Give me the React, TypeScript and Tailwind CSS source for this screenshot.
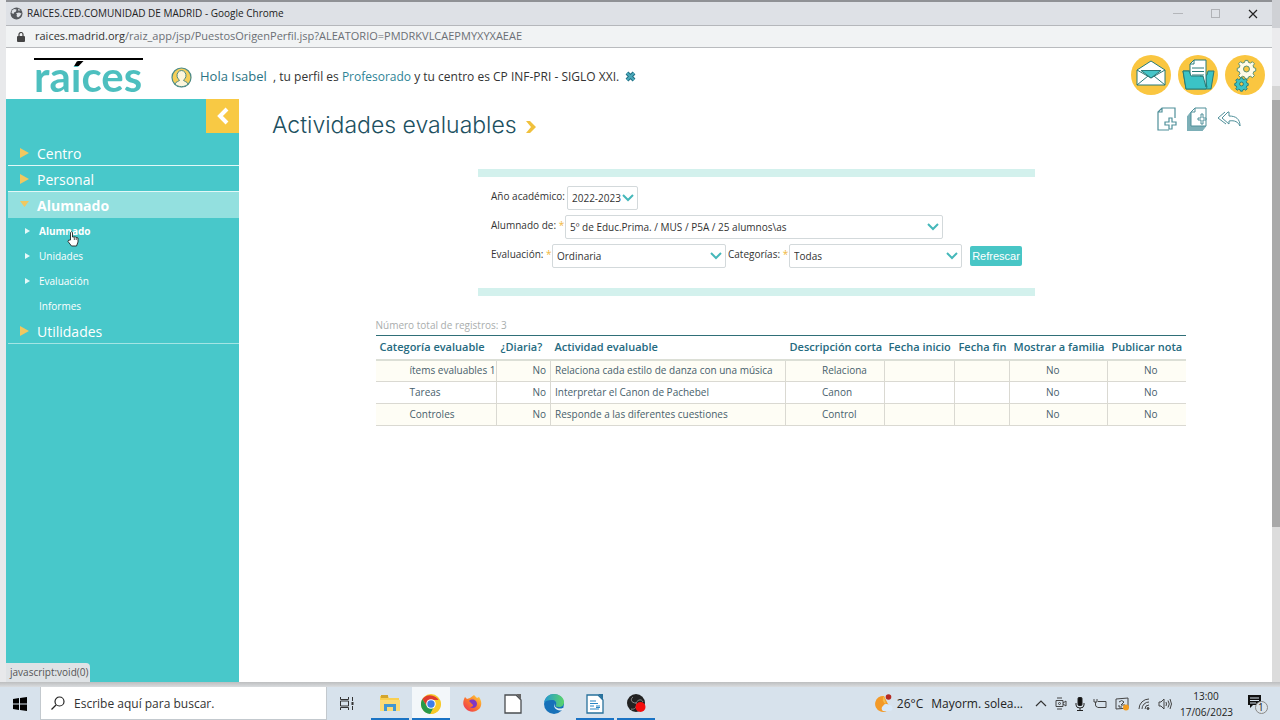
import React, { useState } from 'react';

const ROWS = [
  { categoria: 'ítems evaluables 1', diaria: 'No', actividad: 'Relaciona cada estilo de danza con una música', corta: 'Relaciona', familia: 'No', nota: 'No' },
  { categoria: 'Tareas', diaria: 'No', actividad: 'Interpretar el Canon de Pachebel', corta: 'Canon', familia: 'No', nota: 'No' },
  { categoria: 'Controles', diaria: 'No', actividad: 'Responde a las diferentes cuestiones', corta: 'Control', familia: 'No', nota: 'No' },
];

const SUBMENU = [
  { label: 'Alumnado', arrow: true },
  { label: 'Unidades', arrow: true },
  { label: 'Evaluación', arrow: true },
  { label: 'Informes', arrow: false },
];

const GEAR =
  'M-2 -12h4l1 3 3 1 3-2 3 3-2 3 1 3 3 1v4l-3 1-1 3 2 3-3 3-3-2-3 1-1 3h-4l-1-3-3-1-3 2-3-3 2-3-1-3-3-1v-4l3-1 1-3-2-3 3-3 3 2 3-1z';

function TitleBar() {
  return (
    <div className="h-[26px] shrink-0 flex items-center justify-between bg-[#dee1e6] border-t-2 border-t-[#8f9195] border-b border-b-[#b5b7bb] pl-1 pr-[14px]">
      <div className="flex items-center gap-1">
        <svg width="13" height="13" viewBox="0 0 13 13" aria-hidden="true">
          <circle cx="6.5" cy="6.5" r="6" fill="#55585d" />
          <path d="M2 3.500l2-1.500 2.500.5-.5 2-2 1-.5 1.500L1.500 6zM7 6l2-.5 2.500 1-1.500 2.500-2 1.500-1.500-1.500.5-1.500-1-1zM8.500 1.500l2 2H8z" fill="#dee1e6" />
        </svg>
        <span className="text-[10px] text-[#222]">RAICES.CED.COMUNIDAD DE MADRID - Google Chrome</span>
      </div>
      <div className="flex items-center gap-7">
        <button aria-label="Minimizar" className="w-[10px] h-[10px] flex items-center">
          <span className="w-full h-px bg-[#b4b6ba]" />
        </button>
        <button aria-label="Maximizar" className="w-[9px] h-[9px] border border-[#b0b2b6]" />
        <button aria-label="Cerrar">
          <svg width="10" height="10" viewBox="0 0 10 10" stroke="#222" strokeWidth="1.200">
            <path d="M1 1l8 8M9 1l-8 8" />
          </svg>
        </button>
      </div>
    </div>
  );
}

function AddressBar() {
  return (
    <div className="h-[22px] shrink-0 flex items-center gap-[10px] bg-[#f1f3f4] border-b border-[#b9bbbe] pl-[11px]">
      <svg width="8" height="10" viewBox="0 0 8 10" aria-hidden="true">
        <rect y="4" width="8" height="6" rx="1" fill="#444" />
        <path d="M2 4V2.500a2 2 0 0 1 4 0V4" fill="none" stroke="#444" strokeWidth="1.200" />
      </svg>
      <span className="text-[11px] text-[#6b6f74]">
        <span className="text-[#333]">raices.madrid.org</span>/raiz_app/jsp/PuestosOrigenPerfil.jsp?ALEATORIO=PMDRKVLCAEPMYXYXAEAE
      </span>
    </div>
  );
}

function Header() {
  return (
    <header className="h-[51px] shrink-0 flex items-center bg-white pl-7 pr-[7px] pt-[3px]">
      <div className="w-[109px] h-[34px] border-t-2 border-black flex items-center">
        <span className="text-[42px] leading-[32px] font-bold font-[Lato,sans-serif] text-transparent bg-clip-text bg-[linear-gradient(#000_6px,#4dbfbf_6px)]">
          raíces
        </span>
      </div>
      <svg className="ml-7 mt-1" width="21" height="21" viewBox="0 0 21 21" aria-hidden="true">
        <circle cx="10.500" cy="10.500" r="9.500" fill="#f5cf5a" stroke="#4b8a86" strokeWidth="1.200" />
        <path d="M4 17c1-3 4-2 4.500-4a4.500 5 0 1 1 4 0c.5 2 3.500 1 4.500 4-3 3.500-10 3.500-13 0z" fill="#fdf6dc" stroke="#4b8a86" />
      </svg>
      <p className="ml-2 mt-[3px] text-xs text-[#333] whitespace-nowrap">
        <a href="#" className="text-[13px] text-[#2a7384]">Hola Isabel</a>&nbsp; , tu perfil es{' '}
        <a href="#" className="text-[#2e8496]">Profesorado</a> y tu centro es CP INF-PRI - SIGLO XXI.
      </p>
      <button aria-label="Cerrar sesión" className="ml-[6px] mt-[3px]">
        <svg width="11" height="11" viewBox="0 0 11 11">
          <path d="M2 2l7 7M9 2l-7 7" stroke="#236f83" strokeWidth="4" />
          <path d="M2 2l7 7M9 2l-7 7" stroke="#4aa9bb" strokeWidth="2" />
        </svg>
      </button>
      <div className="ml-auto flex gap-[7px]">
        <button aria-label="Mensajes">
          <svg width="40" height="40" viewBox="0 0 40 40" stroke="#287b78" strokeLinejoin="round">
            <circle cx="20" cy="20" r="20" fill="#fac640" stroke="none" />
            <path d="M6 15L20 6l14 9v15H6z" fill="#fff" />
            <path d="M10 15.500h20L20 23z" fill="#45c6c8" />
            <path d="M6 15l14 8 14-8M6 30l11-9M34 30l-11-9" fill="none" />
          </svg>
        </button>
        <button aria-label="Documentos">
          <svg width="40" height="40" viewBox="0 0 40 40" stroke="#287b78" strokeLinejoin="round">
            <circle cx="20" cy="20" r="20" fill="#fac640" stroke="none" />
            <path d="M5 16h9v4h15l1-4h6l-3 18H8z" fill="#3bc3c6" />
            <path d="M12 9l4-4h12v27l-3-7H12z" fill="#fff" />
            <path d="M12 9h4V5M14 13h12M14 16.500h12M14 20h12" fill="none" />
            <path d="M5 16h6l2 5h13l3 11-1 2H8z" fill="#3bc3c6" />
            <path d="M28 20v12l-3-11h-3" fill="#fff" />
          </svg>
        </button>
        <button aria-label="Configuración">
          <svg width="40" height="40" viewBox="0 0 40 40">
            <circle cx="20" cy="20" r="20" fill="#fac640" />
            <g transform="translate(21.500 14) scale(.66)" stroke="#4b8a70" strokeWidth="1.400">
              <path d={GEAR} transform="translate(0 -1)" fill="#fffbe8" />
              <circle r="4.500" fill="#fac640" />
            </g>
            <g transform="translate(16.500 29) scale(.48)" stroke="#287b78" strokeWidth="2">
              <path d={GEAR} transform="translate(0 -1)" fill="#3bc3c6" />
              <circle r="4" fill="#fac640" />
            </g>
          </svg>
        </button>
      </div>
    </header>
  );
}

function MenuItem({ label, open = false, last = false }: { label: string; open?: boolean; last?: boolean }) {
  return (
    <button
      aria-expanded={open}
      className={`w-full h-[26px] flex items-center gap-2 pl-3 pt-px text-left text-[14px] text-white border-b ${
        open ? 'font-bold bg-[#93e0df] border-[#93e0df]' : last ? 'border-[#a4e5e4]' : 'border-[#e2f8f7]'
      }`}
    >
      <svg width="9" height="10" viewBox="0 0 9 10" fill="#f0c860" aria-hidden="true">
        <path d={open ? 'M0 1h9L4.500 7z' : 'M0 0l9 5-9 5z'} />
      </svg>
      {label}
    </button>
  );
}

function Sidebar() {
  return (
    <nav className="relative w-[233px] shrink-0 bg-[#48c8ca] flex flex-col">
      <button aria-label="Ocultar menú" className="self-end w-[33px] h-[34px] bg-[#f8c944] flex items-center justify-center">
        <svg width="13" height="18" viewBox="0 0 13 18" fill="none" stroke="#fff" strokeWidth="4">
          <path d="M11 2L4 9l7 7" />
        </svg>
      </button>
      <div className="pl-[2px] pt-[7px]">
        <MenuItem label="Centro" />
        <MenuItem label="Personal" />
        <MenuItem label="Alumnado" open />
        <ul>
          {SUBMENU.map((item, i) => (
            <li key={item.label}>
              <a href="#" className={`h-[25px] flex items-center gap-2 pl-[17px] pt-px text-[10px] text-white ${i === 0 ? 'font-bold' : ''}`}>
                <span className="w-[6px]">
                  {item.arrow && (
                    <svg width="5" height="6" viewBox="0 0 5 6" fill="#e6f9f9" aria-hidden="true">
                      <path d="M0 0l5 3-5 3z" />
                    </svg>
                  )}
                </span>
                {item.label}
              </a>
            </li>
          ))}
        </ul>
        <MenuItem label="Utilidades" last />
      </div>
      {/* pointer over the submenu */}
      <svg className="absolute left-[61px] top-[132px]" width="12" height="16" viewBox="0 0 12 16" aria-hidden="true">
        <path d="M3.500 9V1.500q1-1.500 2 0V6q3-.5 5.500 1v4l-1.500 4h-5L1 10.500q0-2 2.500-1.500z" fill="#fff" stroke="#222" strokeWidth=".9" />
        <path d="M7.300 6.500v2.500M9.200 7v2" stroke="#222" strokeWidth=".8" />
      </svg>
      <div className="absolute left-0 bottom-0 h-[19px] w-[84px] bg-[#dfe3e6] rounded-tr-sm px-1 text-[10px] leading-[18px] text-[#555]">
        javascript:void(0)
      </div>
    </nav>
  );
}

function Field({ id, label, required = false, labelClass, selectClass, options }: {
  id: string;
  label: string;
  required?: boolean;
  labelClass: string;
  selectClass: string;
  options: string[];
}) {
  const [value, setValue] = useState(options[0]);
  return (
    <div className="flex items-center">
      <label htmlFor={id} className={`pb-1 whitespace-nowrap ${labelClass}`}>
        {label}
        {required && <span className="text-[#f0b840]"> *</span>}
      </label>
      <div className={`relative ${selectClass}`}>
        <select
          id={id}
          value={value}
          onChange={(e) => setValue(e.target.value)}
          className="block w-full h-6 appearance-none rounded-xs border border-[#d3d9db] bg-white pl-1 outline-none"
        >
          {options.map((o) => (
            <option key={o}>{o}</option>
          ))}
        </select>
        <svg className="absolute right-[4px] top-[8px] pointer-events-none" width="12" height="8" viewBox="0 0 12 8" fill="none" stroke="#45b8ba" strokeWidth="2">
          <path d="M1 1l5 5 5-5" />
        </svg>
      </div>
    </div>
  );
}

function Filters() {
  return (
    <form className="w-[557px] mx-auto border-y-8 border-[#d3f1ed] pt-[9px] pb-[20px] pl-[13px] flex flex-col gap-[5px] text-[10px] text-[#333]">
      <Field id="anio" label="Año académico:" labelClass="w-[76px]" selectClass="w-[71px]" options={['2022-2023']} />
      <Field id="grupo" label="Alumnado de:" required labelClass="w-[74px]" selectClass="w-[378px]" options={['5º de Educ.Prima. / MUS / P5A / 25 alumnos\\as']} />
      <div className="flex items-center">
        <Field id="evaluacion" label="Evaluación:" required labelClass="w-[61px]" selectClass="w-[174px]" options={['Ordinaria']} />
        <Field id="categorias" label="Categorías:" required labelClass="w-[63px] pl-[2px]" selectClass="w-[173px]" options={['Todas']} />
        <button type="button" className="ml-2 w-[52px] h-5 rounded-xs bg-[#48c6c6] text-white text-[11px] font-['Liberation_Sans',sans-serif]">
          Refrescar
        </button>
      </div>
    </form>
  );
}

function ActivityTable() {
  return (
    <div className="pl-12 mt-[22px] flex justify-center">
      <div className="w-[810px]">
        <p className="h-[17px] text-[10px] leading-[15px] text-[#a9adad]">Número total de registros: 3</p>
        <table className="w-full table-fixed border-collapse text-[10px] text-[#47606c]">
          <colgroup>
            <col className="w-[121px]" />
            <col className="w-[54px]" />
            <col className="w-[235px]" />
            <col className="w-[99px]" />
            <col className="w-[70px]" />
            <col className="w-[55px]" />
            <col className="w-[98px]" />
            <col className="w-[78px]" />
          </colgroup>
          <thead>
            <tr className="h-6 border-t border-t-[#2f6f78] border-b-2 border-b-[#dcdfd6] text-left text-[11px] text-[#256a80] whitespace-nowrap">
              <th className="pl-1 font-semibold">Categoría evaluable</th>
              <th className="pl-1 font-semibold">¿Diaria?</th>
              <th className="pl-1 font-semibold">Actividad evaluable</th>
              <th className="pl-1 font-semibold">Descripción corta</th>
              <th className="pl-1 font-semibold">Fecha inicio</th>
              <th className="pl-1 font-semibold">Fecha fin</th>
              <th className="pl-1 font-semibold">Mostrar a familia</th>
              <th className="pl-1 font-semibold">Publicar nota</th>
            </tr>
          </thead>
          <tbody>
            {ROWS.map((row) => (
              <tr key={row.corta} className="h-[22px] border-b border-[#dad9d2] odd:bg-[#fefdf5] whitespace-nowrap">
                <td className="pl-[34px]">{row.categoria}</td>
                <td className="border-l border-[#dad9d2] pr-1 text-right">{row.diaria}</td>
                <td className="border-l border-[#dad9d2] pl-1">{row.actividad}</td>
                <td className="border-l border-[#dad9d2] pl-9">{row.corta}</td>
                <td className="border-l border-[#dad9d2]" />
                <td className="border-l border-[#dad9d2]" />
                <td className="border-l border-[#dad9d2] pl-9">{row.familia}</td>
                <td className="border-l border-[#dad9d2] pl-9">{row.nota}</td>
              </tr>
            ))}
          </tbody>
        </table>
      </div>
    </div>
  );
}

function Main() {
  return (
    <main className="flex-1 min-w-0 bg-white pl-[2px]">
      <div className="h-[70px] flex justify-between pl-[31px] pr-[30px] pt-2">
        <h1 className="h-9 flex items-center gap-2 text-[23px] font-light text-[#20505f] font-[Inter,sans-serif]">
          Actividades evaluables
          <svg className="mt-1" width="11" height="12" viewBox="0 0 11 12" fill="#f0c03c" aria-hidden="true">
            <path d="M1 0h4l6 6-6 6H1l5-6z" />
          </svg>
        </h1>
        <div className="flex gap-[10px] h-6">
          <button aria-label="Nueva actividad">
            <svg width="20" height="24" viewBox="0 0 20 24" fill="none" stroke="#4f8f99" strokeWidth="1.200">
              <path d="M18 11V1H5L1 5v18h11M1 5h4V1" />
              <path d="M12 11h3v4h4v3h-4v4h-3v-4H8v-3h4z" fill="#fff" />
            </svg>
          </button>
          <button aria-label="Copiar actividad">
            <svg width="20" height="24" viewBox="0 0 20 24" stroke="#4f8f99">
              <path d="M0 10l4-5v14h15l-4 5H0z" fill="#7dafb7" stroke="#7dafb7" />
              <path d="M8 1h11v18H4V5z" fill="#fff" />
              <path d="M4 5h4V1" fill="none" />
              <path d="M14 7h2v4h3v2h-3v4h-2v-4h-3v-2h3z" fill="#fff" />
            </svg>
          </button>
          <button aria-label="Volver">
            <svg width="25" height="18" viewBox="0 0 25 18" fill="none" stroke="#4f8f99" strokeLinejoin="round">
              <path d="M11 2L5 8l7 6v-3c6-1 9 1 11 5 0-7-4-10-11-10V2z" />
              <path d="M8 2L1 8l8 6" />
            </svg>
          </button>
        </div>
      </div>
      <Filters />
      <ActivityTable />
    </main>
  );
}

function WriterPage({ lines = false }: { lines?: boolean }) {
  return (
    <svg width="18" height="20" viewBox="0 0 18 20" aria-hidden="true">
      <path d="M1 1h11l5 5v13H1z" fill="#fff" stroke={lines ? '#28719c' : '#4a4d50'} strokeWidth="1.300" />
      <path d="M12 0h5v6z" fill={lines ? '#28719c' : '#666'} />
      {lines && <path d="M4 7h6M4 9.500h8M4 12h4M4 15h9M10 12h4M10 13.500h4" stroke="#2886c4" strokeWidth="1.200" />}
    </svg>
  );
}

function AppButton({ label, active = false, running = false, children }: {
  label: string;
  active?: boolean;
  running?: boolean;
  children: React.ReactNode;
}) {
  return (
    <button
      aria-label={label}
      className={`w-[38px] h-full flex items-center justify-center pt-[2px] border-b-2 ${active ? 'bg-[#f3f7fa]' : ''} ${
        running ? 'border-[#1a73c4]' : 'border-transparent'
      }`}
    >
      {children}
    </button>
  );
}

function Taskbar() {
  return (
    <footer className="h-[33px] shrink-0 flex items-center bg-[#d7e2ec] text-[#222]">
      <button aria-label="Inicio" className="w-10 h-full flex items-center justify-center">
        <svg width="14" height="14" viewBox="0 0 14 14">
          <path d="M0 2l6-1v5.500H0zM7 1l7-1v6.500H7zM0 7.500h6V13l-6-1zM7 7.500h7V14l-7-1z" />
        </svg>
      </button>
      <label className="w-[287px] h-full flex items-center gap-[9px] pl-[10px] bg-white border-x border-b border-[#c3c9ce]">
        <svg width="14" height="14" viewBox="0 0 14 14" fill="none" stroke="#222" strokeWidth="1.200">
          <circle cx="8.500" cy="5.500" r="4.500" />
          <path d="M5 9l-4.500 4.500" />
        </svg>
        <input className="w-56 pt-px text-xs outline-none placeholder:text-[#333]" placeholder="Escribe aquí para buscar." aria-label="Buscar" />
      </label>
      <button aria-label="Vista de tareas" className="w-10 h-full flex items-center justify-center">
        <svg width="14" height="13" viewBox="0 0 14 13" fill="none" stroke="#333">
          <path d="M.5 0v2.500h8V0M.5 13v-2.500h8V13M.5 4h8v5h-8zM12.500 0v4M12.500 9v4" />
          <path d="M11.500 5h2v3h-2z" fill="#333" stroke="none" />
        </svg>
      </button>
      <div className="h-full flex gap-[3px] pl-1">
        <AppButton label="Explorador de archivos" running>
          <svg width="20" height="17" viewBox="0 0 20 17">
            <path d="M0 1h8l1 2h10v13H0z" fill="#f9cf50" />
            <path d="M1 0h7v3H1z" fill="#d3a52d" />
            <path d="M0 5h20v11H0z" fill="#fbdb76" />
            <path d="M4 16V9h12v7h-3v-4H7v4z" fill="#4196d1" />
          </svg>
        </AppButton>
        <AppButton label="Google Chrome" active running>
          <svg width="20" height="20" viewBox="0 0 20 20">
            <circle cx="10" cy="10" r="10" fill="#f7c928" />
            <path d="M10 10H19a10 10 0 0 0-17.700-5L6 12.500z" fill="#df3b2e" />
            <path d="M1.300 5a10 10 0 0 0 8 15l4.200-8L6 12.500z" fill="#28994a" />
            <path d="M10 6h9a10 10 0 0 1-9.700 14l4.200-8z" fill="#f7c928" />
            <circle cx="10" cy="10" r="4.800" fill="#fff" />
            <circle cx="10" cy="10" r="3.700" fill="#3d7de8" />
          </svg>
        </AppButton>
        <AppButton label="Firefox">
          <svg width="19" height="19" viewBox="0 0 19 19">
            <defs>
              <linearGradient id="fox" x1="1" y1="0" x2="0" y2="1">
                <stop offset="0" stopColor="#ffd83d" />
                <stop offset=".5" stopColor="#fb7a2c" />
                <stop offset="1" stopColor="#ec2a5c" />
              </linearGradient>
            </defs>
            <path d="M2 3l2 2 3-1 4-3 3 3 2-1c3 4 3 9 0 12s-9 4-13 0-3-8-1-12z" fill="url(#fox)" />
            <path d="M6 7c3-3 8-1 8 3s-5 5-7 3c3 0 4-2 2-3z" fill="#8137c5" />
          </svg>
        </AppButton>
        <AppButton label="LibreOffice"><WriterPage /></AppButton>
        <AppButton label="Microsoft Edge">
          <svg width="20" height="20" viewBox="0 0 20 20">
            <defs>
              <linearGradient id="edge">
                <stop offset="0" stopColor="#2496d3" />
                <stop offset="1" stopColor="#59d568" />
              </linearGradient>
            </defs>
            <circle cx="10" cy="10" r="10" fill="#1671b9" />
            <path d="M0 9C1 3 5 0 10 0c6 0 10 4 10 8 0 3-2 5-5 5-3 0-4-1-3-2 1-3-1-5-4-5C4 6 1 7 0 9z" fill="url(#edge)" />
            <path d="M11 9c-2 3 2 7 8 5l1 1-1 1c-6 2-11-3-8-7z" fill="#e4eff5" />
          </svg>
        </AppButton>
        <AppButton label="LibreOffice Writer" running><WriterPage lines /></AppButton>
        <AppButton label="Grabador de pantalla" running>
          <svg width="19" height="19" viewBox="0 0 19 19">
            <circle cx="9" cy="9" r="9" fill="#222" />
            <path d="M9 9c-5 0-6-4-3-6M9 9c2-4 6-4 7-1M9 9c2 4-2 7-5 6" fill="none" stroke="#888" />
            <circle cx="13.500" cy="13" r="5" fill="#f40d0d" />
          </svg>
        </AppButton>
      </div>
      <div className="ml-auto h-full flex items-center text-xs whitespace-nowrap">
        <svg width="20" height="19" viewBox="0 0 20 19" aria-hidden="true">
          <path d="M11 2a8 8 0 1 0 6 12z" fill="#f39a28" />
          <path d="M10 17a3 3 0 0 1 0-5 4 4 0 0 1 6-1 3 3 0 0 1 1 6z" fill="#d9e9f8" />
          <path d="M11 2a5 5 0 0 0 2 8" fill="#f7bd4e" />
          <circle cx="15.500" cy="3" r="2.800" fill="#b52a22" />
        </svg>
        <span className="ml-1">26°C</span>
        <span className="ml-2">Mayorm. solea...</span>
        <div className="flex items-center gap-2 ml-3">
          <svg width="12" height="7" viewBox="0 0 12 7" fill="none" stroke="#333" strokeWidth="1.200"><path d="M1 6l5-5 5 5" /></svg>
          <svg width="12" height="13" viewBox="0 0 12 13" fill="none" stroke="#444"><path d="M1 3.500h7v6H1zM8 6l3-2v5L8 7M2 1h5M2 12h5" /><circle cx="4.500" cy="6.500" r="1" /></svg>
          <svg width="10" height="14" viewBox="0 0 10 14" fill="none" stroke="#222"><rect x="3" y=".5" width="4" height="8" rx="1" fill="#111" /><path d="M1 6v2q0 3 4 3t4-3V6M5 11v2M2 13.500h6" /></svg>
          <svg width="14" height="11" viewBox="0 0 14 11" fill="none" stroke="#444"><path d="M5 3.500h8v6H4.500M1 1v3h3V1M2.500 4v3q0 2 2 2" /></svg>
          <svg width="15" height="14" viewBox="0 0 15 14" fill="none" stroke="#444"><path d="M1 2l12-1v10l-12 1zM4 5q3-3 5 0L6 8h4M7 10H4V8" /><circle cx="11" cy="10.500" r="3" fill="#f29c20" stroke="none" /></svg>
          <svg width="12" height="12" viewBox="0 0 12 12" fill="none" stroke="#444"><path d="M1 11A10 10 0 0 1 11 1M4 11a7 7 0 0 1 7-7M7 11a4 4 0 0 1 4-4" /><circle cx="10" cy="10.500" r="1" fill="#444" /></svg>
          <svg width="14" height="12" viewBox="0 0 14 12" fill="none" stroke="#444"><path d="M1 4h2l3-3v10L3 8H1zM8 4q1 2 0 4M10 2.500q2.500 3.500 0 7M12 1q3 5 0 10" /></svg>
        </div>
        <div className="w-[52px] ml-2 text-center text-[10px] leading-4">
          <div>13:00</div>
          <div>17/06/2023</div>
        </div>
        <button aria-label="Notificaciones" className="relative ml-4 mr-3 w-5 h-5">
          <svg width="20" height="20" viewBox="0 0 20 20">
            <path d="M0 1h13v10H5l-3 3v-3H0z" fill="#111" />
            <path d="M2 4h9M2 6.500h9M2 9h6" stroke="#d7e2ec" />
            <circle cx="13.500" cy="13.500" r="6" fill="#dce4ea" stroke="#888" />
          </svg>
          <span className="absolute left-[10px] top-[7px] text-[10px] leading-[13px]">1</span>
        </button>
      </div>
    </footer>
  );
}

export default function App() {
  return (
    <div className="h-screen flex flex-col overflow-hidden bg-[#dcdcde] font-['Open_Sans','Noto_Sans',sans-serif]">
      <div className="flex-1 min-h-0 flex">
        <div className="w-[6px] shrink-0 bg-[#e8e9eb]" />
        <div className="flex-1 min-w-0 flex flex-col bg-white">
          <TitleBar />
          <AddressBar />
          <Header />
          <div className="flex-1 min-h-0 flex">
            <Sidebar />
            <Main />
          </div>
        </div>
        {/* edge of the window behind */}
        <div className="w-2 shrink-0 flex flex-col bg-[#e4e5e7]">
          <div className="h-7 bg-[#cfd1d5]" />
          <div className="h-[58px] bg-[#ebebed]" />
          <div className="h-[14px] bg-[#d5d5d5]" />
          <div className="h-[427px] bg-[#a9a9a9]" />
          <div className="flex-1 bg-[#dcdcdc]" />
        </div>
      </div>
      <div className="h-[5px] shrink-0 bg-gradient-to-b from-[#bdbebf] to-[#d9dcdf]" />
      <Taskbar />
    </div>
  );
}
